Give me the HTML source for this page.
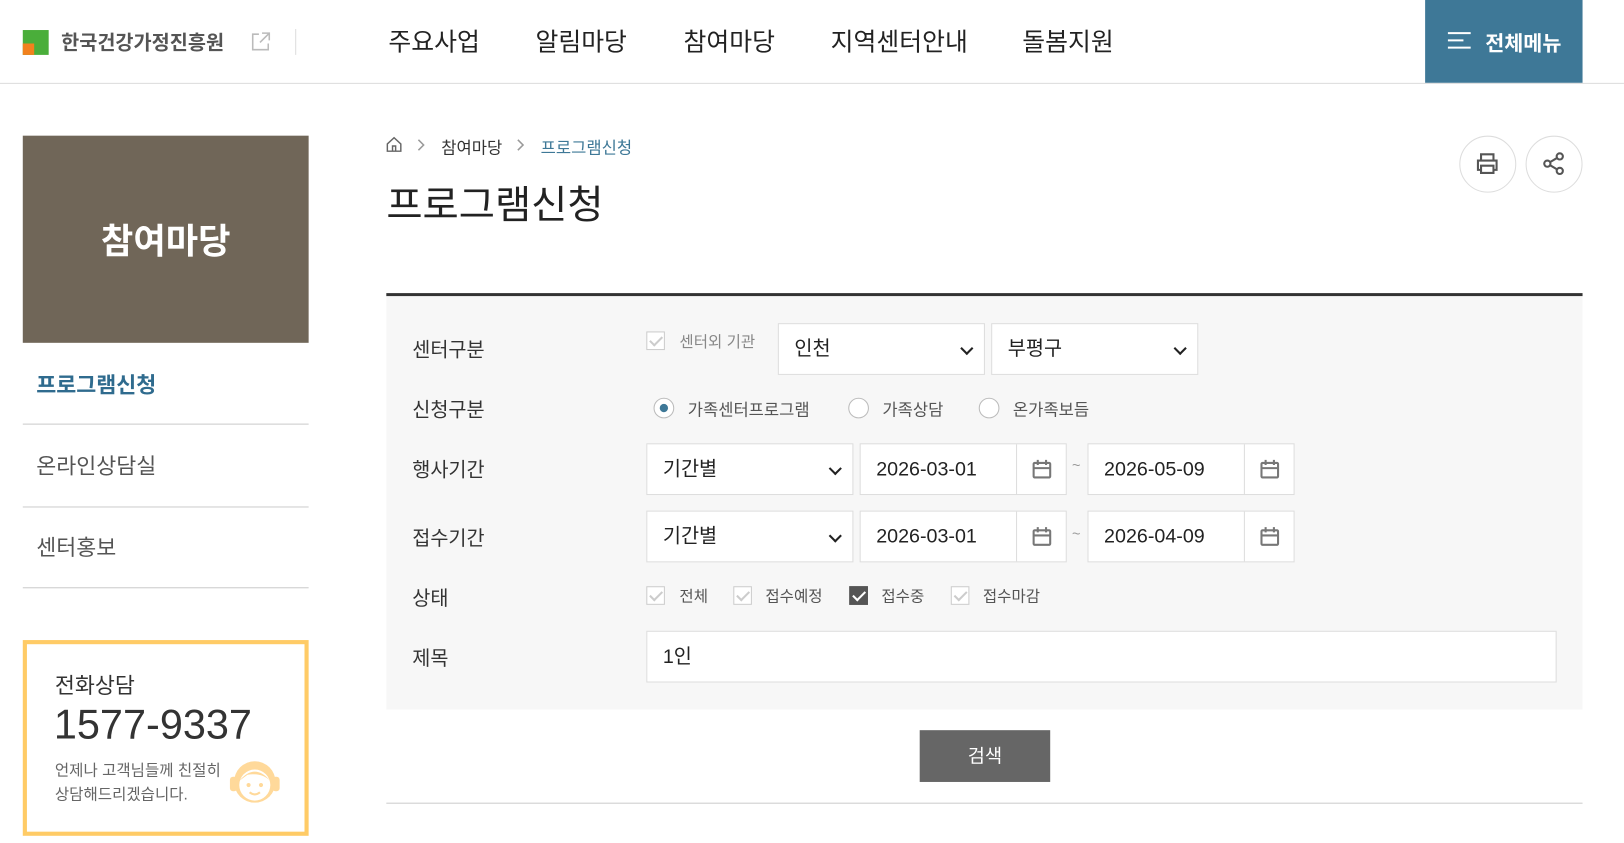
<!DOCTYPE html>
<html><head><meta charset="utf-8"><style>
*{box-sizing:border-box;margin:0;padding:0}
body{width:1624px;height:843px;background:#fff;font-family:"Liberation Sans","Noto Sans CJK KR",sans-serif;color:#333;position:relative;overflow:hidden}
#w{position:absolute;left:0;top:0;width:1568px;height:814px;transform:scale(1.0357);transform-origin:0 0}
.a{position:absolute}
.nav{font-size:24px;color:#222;top:21px}
.lbl{font-size:19px;color:#333;left:398px}
.box{position:absolute;background:#fff;border:1px solid #ddd;height:50px;font-size:19px;color:#222;padding-left:15px;line-height:50px}
.sel::after{content:"";position:absolute;right:12px;top:19px;width:7px;height:7px;border-right:2px solid #222;border-bottom:2px solid #222;transform:rotate(45deg)}
.cal{position:absolute;right:0;top:0;width:48px;height:48px;border-left:1px solid #ddd}
.cb{position:absolute;width:18px;height:18px;border:1px solid #ccc;background:#fff}
.cb::after{content:"";position:absolute;left:5px;top:1px;width:5px;height:10px;border-right:2px solid #ccc;border-bottom:2px solid #ccc;transform:rotate(45deg)}
.cb.on{background:#555;border-color:#555}.cb.on::after{border-color:#fff}
.ct{font-size:16px;color:#555}
.rd{position:absolute;width:20px;height:20px;border:1px solid #bbb;border-radius:50%;background:#fff}
.side{left:35px;font-size:21px;color:#555}
.hl{position:absolute;left:22px;width:276px;height:1px;background:#ccc}
</style></head><body><div id="w">
<div class="a" style="left:22px;top:29px;width:25px;height:24px;background:#4aae3a"></div>
<div class="a" style="left:22px;top:42px;width:11px;height:11px;background:#f2811d"></div>
<div class="a" style="left:59px;top:27px;font-size:19px;color:#555;font-weight:600">한국건강가정진흥원</div>
<svg class="a" style="left:242px;top:30px" width="20" height="20" viewBox="0 0 20 20" fill="none" stroke="#bbb" stroke-width="1.5"><path d="M8 3H2v15h15v-6M11 2h7v7M18 2l-9 9"/></svg>
<div class="a" style="left:285px;top:28px;width:1px;height:25px;background:#ddd"></div>
<div class="a nav" style="left:375px">주요사업</div>
<div class="a nav" style="left:517px">알림마당</div>
<div class="a nav" style="left:660px">참여마당</div>
<div class="a nav" style="left:802px">지역센터안내</div>
<div class="a nav" style="left:987px">돌봄지원</div>
<div class="a" style="left:1376px;top:0;width:152px;height:80px;background:#3e7897"></div>
<svg class="a" style="left:1397px;top:29px" width="24" height="20" stroke="#fff" stroke-width="2"><path d="M1 3h22M1 10h15M1 17h22"/></svg>
<div class="a" style="left:1434px;top:26px;font-size:20px;color:#fff;font-weight:700">전체메뉴</div>
<div class="a" style="left:0;top:80px;width:1568px;height:1px;background:#ddd"></div>
<div class="a" style="left:22px;top:131px;width:276px;height:200px;background:#706658"></div>
<div class="a" style="left:22px;top:206px;width:276px;text-align:center;font-size:34px;color:#fff;font-weight:700">참여마당</div>
<div class="a side" style="top:356px;color:#2f6b8e;font-weight:600">프로그램신청</div>
<div class="hl" style="top:409px"></div>
<div class="a side" style="top:434px">온라인상담실</div>
<div class="hl" style="top:489px"></div>
<div class="a side" style="top:513px">센터홍보</div>
<div class="hl" style="top:567px"></div>
<div class="a" style="left:22px;top:618px;width:276px;height:189px;border:4px solid #ffcb66"></div>
<div class="a" style="left:53px;top:646px;font-size:21px;color:#333">전화상담</div>
<div class="a" style="left:52px;top:678px;font-size:40px;color:#333">1577-9337</div>
<div class="a" style="left:53px;top:733px;font-size:15px;color:#666;line-height:23px">언제나 고객님들께 친절히<br>상담해드리겠습니다.</div>
<svg class="a" style="left:219px;top:728px" width="54" height="54" viewBox="0 0 54 54"><circle cx="27" cy="27" r="20" fill="#ffd99a"/><circle cx="27" cy="30" r="15" fill="#fff"/><path d="M12 26 Q27 8 42 26 Q34 18 20 20Z" fill="#ffd99a"/><circle cx="21" cy="30" r="2" fill="#ffd99a"/><circle cx="33" cy="30" r="2" fill="#ffd99a"/><path d="M22 37q5 4 10 0" stroke="#ffd99a" stroke-width="2" fill="none"/><rect x="3" y="22" width="7" height="14" rx="3" fill="#ffd99a"/><rect x="44" y="22" width="7" height="14" rx="3" fill="#ffd99a"/></svg>
<svg class="a" style="left:372px;top:131px" width="17" height="17" viewBox="0 0 17 17" fill="none" stroke="#666" stroke-width="1.4"><path d="M2 8L8.5 2 15 8v7H2z M7 15v-5h3v5"/></svg>
<svg class="a" style="left:402px;top:134px" width="10" height="12" fill="none" stroke="#999" stroke-width="1.5"><path d="M2 1l5 5-5 5"/></svg>
<div class="a" style="left:426px;top:129px;font-size:16px;color:#333">참여마당</div>
<svg class="a" style="left:498px;top:134px" width="10" height="12" fill="none" stroke="#999" stroke-width="1.5"><path d="M2 1l5 5-5 5"/></svg>
<div class="a" style="left:522px;top:129px;font-size:16px;color:#3e7897">프로그램신청</div>
<div class="a" style="left:373px;top:167px;font-size:38px;color:#222">프로그램신청</div>
<div class="a" style="left:1409px;top:131px;width:55px;height:55px;border:1px solid #ddd;border-radius:50%"></div>
<svg class="a" style="left:1424px;top:146px" width="24" height="24" viewBox="0 0 24 24" fill="none" stroke="#555" stroke-width="2"><path d="M6 8V3h12v5M6 18H3v-9h18v9h-3M6 14h12v7H6z"/></svg>
<div class="a" style="left:1473px;top:131px;width:55px;height:55px;border:1px solid #ddd;border-radius:50%"></div>
<svg class="a" style="left:1488px;top:146px" width="24" height="24" viewBox="0 0 24 24" fill="none" stroke="#555" stroke-width="2"><circle cx="18" cy="5" r="3"/><circle cx="6" cy="12" r="3"/><circle cx="18" cy="19" r="3"/><path d="M8.6 10.5l6.8-4M8.6 13.5l6.8 4"/></svg>
<div class="a" style="left:373px;top:283px;width:1155px;height:3px;background:#333"></div>
<div class="a" style="left:373px;top:286px;width:1155px;height:399px;background:#f7f7f7"></div>
<div class="a lbl" style="top:323px">센터구분</div>
<div class="cb" style="left:624px;top:320px"></div>
<div class="a ct" style="left:656px;top:319px;color:#888;font-size:15px">센터외 기관</div>
<div class="box sel" style="left:751px;top:312px;width:200px">인천</div>
<div class="box sel" style="left:957px;top:312px;width:200px">부평구</div>
<div class="a lbl" style="top:381px">신청구분</div>
<div class="rd" style="left:631px;top:384px"><div style="position:absolute;left:5px;top:5px;width:8px;height:8px;border-radius:50%;background:#3e7897"></div></div>
<div class="a ct" style="left:664px;top:382px">가족센터프로그램</div>
<div class="rd" style="left:819px;top:384px"></div>
<div class="a ct" style="left:852px;top:382px">가족상담</div>
<div class="rd" style="left:945px;top:384px"></div>
<div class="a ct" style="left:978px;top:382px">온가족보듬</div>
<div class="a lbl" style="top:439px">행사기간</div>
<div class="box sel" style="left:624px;top:428px;width:200px">기간별</div>
<div class="box" style="left:830px;top:428px;width:200px">2026-03-01<div class="cal"><svg style="position:absolute;left:14px;top:14px" width="20" height="20" viewBox="0 0 20 20" fill="none" stroke="#777" stroke-width="2"><rect x="2" y="4" width="16" height="14" rx="1"/><path d="M2 9h16M6 1v5M14 1v5"/></svg></div></div>
<div class="a" style="left:1035px;top:441px;font-size:14px;color:#999">~</div>
<div class="box" style="left:1050px;top:428px;width:200px">2026-05-09<div class="cal"><svg style="position:absolute;left:14px;top:14px" width="20" height="20" viewBox="0 0 20 20" fill="none" stroke="#777" stroke-width="2"><rect x="2" y="4" width="16" height="14" rx="1"/><path d="M2 9h16M6 1v5M14 1v5"/></svg></div></div>
<div class="a lbl" style="top:505px">접수기간</div>
<div class="box sel" style="left:624px;top:493px;width:200px">기간별</div>
<div class="box" style="left:830px;top:493px;width:200px">2026-03-01<div class="cal"><svg style="position:absolute;left:14px;top:14px" width="20" height="20" viewBox="0 0 20 20" fill="none" stroke="#777" stroke-width="2"><rect x="2" y="4" width="16" height="14" rx="1"/><path d="M2 9h16M6 1v5M14 1v5"/></svg></div></div>
<div class="a" style="left:1035px;top:507px;font-size:14px;color:#999">~</div>
<div class="box" style="left:1050px;top:493px;width:200px">2026-04-09<div class="cal"><svg style="position:absolute;left:14px;top:14px" width="20" height="20" viewBox="0 0 20 20" fill="none" stroke="#777" stroke-width="2"><rect x="2" y="4" width="16" height="14" rx="1"/><path d="M2 9h16M6 1v5M14 1v5"/></svg></div></div>
<div class="a lbl" style="top:563px">상태</div>
<div class="cb" style="left:624px;top:566px"></div><div class="a ct" style="left:656px;top:565px;font-size:15px">전체</div>
<div class="cb" style="left:708px;top:566px"></div><div class="a ct" style="left:739px;top:565px;font-size:15px">접수예정</div>
<div class="cb on" style="left:820px;top:566px"></div><div class="a ct" style="left:851px;top:565px;font-size:15px">접수중</div>
<div class="cb" style="left:918px;top:566px"></div><div class="a ct" style="left:949px;top:565px;font-size:15px">접수마감</div>
<div class="a lbl" style="top:621px">제목</div>
<div class="box" style="left:624px;top:609px;width:879px">1인</div>
<div class="a" style="left:888px;top:705px;width:126px;height:50px;background:#666;color:#fff;font-size:18px;text-align:center;line-height:50px">검색</div>
<div class="a" style="left:373px;top:775px;width:1155px;height:1px;background:#ccc"></div>
</div></body></html>
